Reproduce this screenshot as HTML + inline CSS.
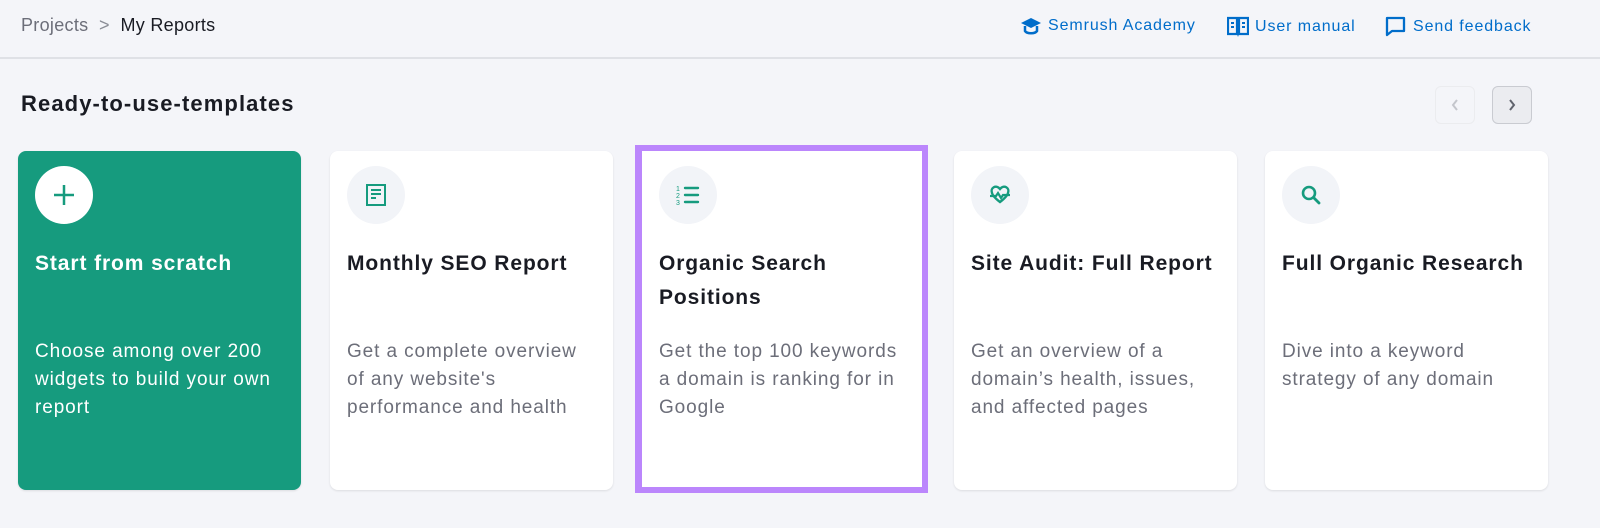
<!DOCTYPE html>
<html><head><style>
*{box-sizing:border-box;margin:0;padding:0}
body{width:1600px;height:528px;background:#f4f5f9;font-family:"Liberation Sans",sans-serif;position:relative;overflow:hidden;color:#191b23}
.hdr{position:absolute;left:0;top:0;width:1600px;height:59px;border-bottom:2px solid #dfe1e6}
.bc{position:absolute;left:21px;top:15px;font-size:18px;color:#6c6e79;letter-spacing:0.3px}
.bc b{font-weight:normal;color:#191b23}
.lnk{position:absolute;top:16px;font-size:16px;color:#006dca;display:flex;align-items:center;gap:6px;letter-spacing:0.9px}
h2{position:absolute;left:21px;top:91px;font-size:22px;font-weight:bold;letter-spacing:1.1px}
.nav{position:absolute;top:86px;width:40px;height:38px;border-radius:6px;border:1px solid #e0e1e6;display:flex;align-items:center;justify-content:center}
.card{position:absolute;top:151px;width:283px;height:339px;background:#fff;border-radius:8px;box-shadow:0 1px 2px rgba(0,0,0,.1)}
.ic{position:absolute;left:17px;top:15px;width:58px;height:58px;border-radius:50%;background:#f2f4f8;display:flex;align-items:center;justify-content:center}
.t{position:absolute;left:17px;top:96px;font-size:21px;font-weight:bold;line-height:34px;width:250px;letter-spacing:0.9px}
.d{position:absolute;left:17px;top:187px;font-size:19px;line-height:28px;color:#6c6e79;width:248px;letter-spacing:0.9px}
</style></head><body>
<div class="hdr">
<div class="bc">Projects &nbsp;<span style="color:#8a8d96">&gt;</span>&nbsp; <b>My Reports</b></div>
<div class="lnk" style="left:1020px"><svg width="22" height="20" viewBox="0 0 22 20"><path d="M11 2 L21 7 L11 12 L1 7Z" fill="#006dca"/><path d="M5 10v5c2 3 10 3 12 0v-5" fill="none" stroke="#006dca" stroke-width="2.5"/></svg>Semrush Academy</div>
<div class="lnk" style="left:1227px"><svg width="22" height="22" viewBox="0 0 22 22"><path d="M1 2h9v16H1zM12 2h9v16h-9z" fill="none" stroke="#006dca" stroke-width="2.2"/><path d="M4 7h3M4 11h3M15 7h3M15 11h3" stroke="#006dca" stroke-width="2"/><path d="M10 18l1 3 1-3" fill="#006dca"/></svg>User manual</div>
<div class="lnk" style="left:1385px"><svg width="22" height="22" viewBox="0 0 22 22"><path d="M2 2h17v13H7l-5 4z" fill="none" stroke="#006dca" stroke-width="2.3" stroke-linejoin="round"/></svg>Send feedback</div>
</div>
<h2>Ready-to-use-templates</h2>
<div class="nav" style="left:1435px;background:#f4f5f9;border-color:#ebecef"><svg width="10" height="14"><path d="M7 2L3 7l4 5" fill="none" stroke="#c4c6cc" stroke-width="2"/></svg></div>
<div class="nav" style="left:1492px;background:#ebecf0;border-color:#c9cbd1"><svg width="10" height="14"><path d="M3 2l4 5-4 5" fill="none" stroke="#60636d" stroke-width="2"/></svg></div>

<div class="card" style="left:18px;background:#169b7e">
<div class="ic" style="background:#fff"><svg width="24" height="24"><path d="M12 2v20M2 12h20" stroke="#169b7e" stroke-width="2.5"/></svg></div>
<div class="t" style="color:#fff">Start from scratch</div>
<div class="d" style="color:#fff">Choose among over 200 widgets to build your own report</div></div>

<div class="card" style="left:330px">
<div class="ic"><svg width="22" height="22" viewBox="0 0 22 22"><rect x="2" y="1" width="18" height="20" fill="none" stroke="#169b7e" stroke-width="2"/><path d="M6 6h10M6 10h10M6 14h5" stroke="#169b7e" stroke-width="2"/></svg></div>
<div class="t">Monthly SEO Report</div>
<div class="d">Get a complete overview of any website's performance and health</div></div>

<div style="position:absolute;left:635px;top:145px;width:293px;height:348px;border:7px solid #bb86fc;background:#fff"></div>
<div class="card" style="left:642px;top:151px;width:280px;height:336px;box-shadow:none;border-radius:0">
<div class="ic"><svg width="24" height="22" viewBox="0 0 24 22"><text x="0" y="7" font-size="7" fill="#169b7e" font-family="Liberation Sans">1</text><text x="0" y="14" font-size="7" fill="#169b7e" font-family="Liberation Sans">2</text><text x="0" y="21" font-size="7" fill="#169b7e" font-family="Liberation Sans">3</text><path d="M9 4h13M9 11h13M9 18h13" stroke="#169b7e" stroke-width="2.4" stroke-linecap="round"/></svg></div>
<div class="t">Organic Search Positions</div>
<div class="d">Get the top 100 keywords a domain is ranking for in Google</div></div>

<div class="card" style="left:954px">
<div class="ic"><svg width="24" height="22" viewBox="0 0 24 22"><path d="M4 9C2 4 8 0 12 5c4-5 10-1 8 4-1 4-8 9-8 9S5 13 4 9z" fill="none" stroke="#169b7e" stroke-width="2.4"/><path d="M2 12h6l2-3 3 5 2-3h7" fill="none" stroke="#169b7e" stroke-width="2.2"/></svg></div>
<div class="t">Site Audit: Full Report</div>
<div class="d">Get an overview of a domain’s health, issues, and affected pages</div></div>

<div class="card" style="left:1265px">
<div class="ic"><svg width="22" height="22" viewBox="0 0 22 22"><circle cx="9" cy="9" r="6" fill="none" stroke="#169b7e" stroke-width="2.6"/><path d="M13.5 13.5L19 19" stroke="#169b7e" stroke-width="2.8" stroke-linecap="round"/></svg></div>
<div class="t">Full Organic Research</div>
<div class="d">Dive into a keyword strategy of any domain</div></div>
</body></html>
